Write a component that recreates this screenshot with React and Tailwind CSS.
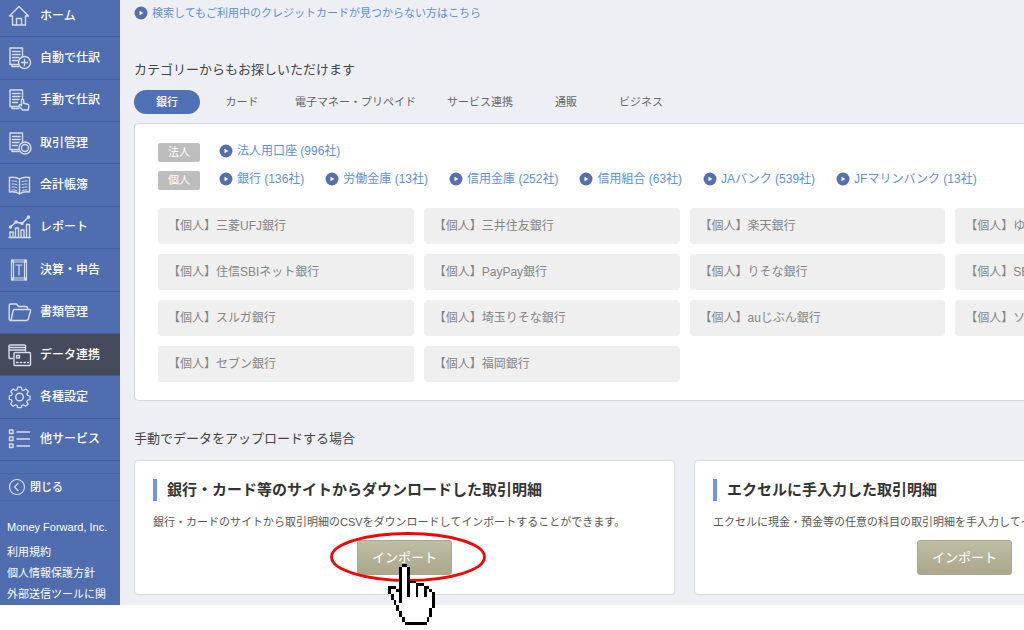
import clsx from 'clsx'

const Icon = ({ children }) => (
  <svg viewBox="0 0 24 24" className="size-6 shrink-0" fill="none" stroke="currentColor" strokeWidth="1.4" strokeLinecap="round" strokeLinejoin="round">
    {children}
  </svg>
)

// sheet of paper shared by the three journal icons
const Sheet = () => (
  <>
    <path d="M14.500 10.500V2H2v16.500h8.500" />
    <path d="M4.500 5.500h7.500M4.500 8.500h7.500M4.500 11.500h6.500M4.500 14.500h5" />
    <path d="M4 18.500v2h7" />
  </>
)

const menu = [
  {
    label: 'ホーム',
    icon: <path d="M1.500 12 11 2.500l9.500 9.500h-3v9h-13v-9zM8.500 21v-6.500h5V21" />,
  },
  {
    label: '自動で仕訳',
    icon: <><Sheet /><circle cx="16.500" cy="16.500" r="6" /><path d="M16.500 13.500v6M13.500 16.500h6" /></>,
  },
  {
    label: '手動で仕訳',
    icon: <><Sheet /><path d="M13.500 17.500v-5.200c0-1.600 2.200-1.600 2.200 0v3l4 .9c1 .3 1.300 1 1.200 2l-.7 3.800h-5.400l-3.600-3.600c-.9-1.100.4-2.300 1.400-1.600z" /></>,
  },
  {
    label: '取引管理',
    icon: <><Sheet /><circle cx="17" cy="17" r="6" /><circle cx="17" cy="17" r="3.500" /></>,
  },
  {
    label: '会計帳簿',
    icon: (
      <>
        <path d="M11.500 6C8.500 4 5 4 1.500 4.500V19c3.500-.5 7-.3 10 2 3-2.300 6.500-2.500 10-2V4.500C18 4 14.500 4 11.500 6zM11.500 6v15" />
        <path d="M4 8c2-.2 3.500 0 5 .8M4 11c2-.2 3.500 0 5 .8M4 14c2-.2 3.500 0 5 .8M4 17c2-.2 3.500 0 5 .8M19 8c-2-.2-3.500 0-5 .8M19 11c-2-.2-3.500 0-5 .8M19 14c-2-.2-3.500 0-5 .8M19 17c-2-.2-3.500 0-5 .8" strokeWidth="1" />
      </>
    ),
  },
  {
    label: 'レポート',
    icon: (
      <>
        <path d="M1 22.500h21.500M2 22v-5h3v5M7.500 22v-9h3v9M13 22v-7h3v7M18.500 22V9.500h3V22" />
        <path d="m2.500 12 5.500-5 6 1.500L20.500 2" />
        <g fill="currentColor"><circle cx="2.500" cy="12" r="1" /><circle cx="8" cy="7" r="1" /><circle cx="14" cy="8.500" r="1" /><circle cx="20.500" cy="2" r="1" /></g>
      </>
    ),
  },
  {
    label: '決算・申告',
    icon: (
      <>
        <path d="M3.500 2h15v20h-15zM3.500 4h15M3.500 20h15M5.500 4v16M16.500 4v16M11 7v10M8 7h6" strokeWidth="1.200" />
        <g fill="currentColor"><circle cx="4.500" cy="3" r=".8" /><circle cx="17.500" cy="3" r=".8" /><circle cx="4.500" cy="21" r=".8" /><circle cx="17.500" cy="21" r=".8" /></g>
      </>
    ),
  },
  {
    label: '書類管理',
    icon: <path d="M3 20.500C1.800 20.500 1.200 20 1.200 19V5.500c0-1 .6-1.500 1.500-1.500H8.500l2 2.500H18c1 0 1.500.5 1.500 1.500v1.500M3 20.500 5 11c.2-1 .8-1.500 1.800-1.500h14.700c1 0 1.300.6 1 1.500l-2.200 8c-.3 1-.9 1.500-1.900 1.500z" />,
  },
  {
    label: 'データ連携',
    active: true,
    icon: (
      <>
        <path d="M4.500 15.500H2c-.7 0-1-.4-1-1V3c0-.6.4-1 1-1h14.500c.6 0 1 .4 1 1v5M1 4.500h16.500M1 7h16.500" />
        <rect x="6" y="9.500" width="16.500" height="13" rx="1" />
        <rect x="8.500" y="12.500" width="3" height="2.500" />
        <path d="M8.500 19.500h12" strokeDasharray="1.500 2.200" />
      </>
    ),
  },
  {
    label: '各種設定',
    icon: (
      <>
        <circle cx="11.500" cy="12" r="3.800" />
        <path d="M10 2h4l.6 3 1.800.7 2.600-1.700 2.800 2.800-1.700 2.600.7 1.800 2.700.6v4l-2.700.6-.9 1.800 1.600 2.400-2.800 2.600-2.500-1.600-1.700.7-.5 2.500h-4l-.6-2.600-1.700-.7-2.600 1.700L2.400 20.400l1.700-2.600-.8-1.700-2.300-.5v-4l2.500-.6.7-1.800L2.500 6.700 5.300 4l2.400 1.600L9.400 5z" transform="matrix(.92 0 0 .9 .4 .4)" />
      </>
    ),
  },
  {
    label: '他サービス',
    icon: (
      <>
        <rect x="1.500" y="3" width="3.500" height="3.500" /><rect x="1.500" y="10" width="3.500" height="3.500" /><rect x="1.500" y="17" width="3.500" height="3.500" />
        <path d="M9 5h12.500M9 12h12.500M9 19h12.500" />
      </>
    ),
  },
]

const tabs = ['銀行', 'カード', '電子マネー・プリペイド', 'サービス連携', '通販', 'ビジネス']

const groups = [
  { name: '法人', links: ['法人用口座 (996社)'] },
  {
    name: '個人',
    links: ['銀行 (136社)', '労働金庫 (13社)', '信用金庫 (252社)', '信用組合 (63社)', 'JAバンク (539社)', 'JFマリンバンク (13社)'],
  },
]

const banks = [
  '三菱UFJ銀行', '三井住友銀行', '楽天銀行', 'ゆうちょ銀行',
  '住信SBIネット銀行', 'PayPay銀行', 'りそな銀行', 'SBI新生銀行',
  'スルガ銀行', '埼玉りそな銀行', 'auじぶん銀行', 'ソニー銀行',
  'セブン銀行', '福岡銀行',
]

const uploads = [
  {
    title: '銀行・カード等のサイトからダウンロードした取引明細',
    text: '銀行・カードのサイトから取引明細のCSVをダウンロードしてインポートすることができます。',
    pointed: true,
  },
  {
    title: 'エクセルに手入力した取引明細',
    text: 'エクセルに現金・預金等の任意の科目の取引明細を手入力してインポートすることができます。',
  },
]

// X = outline, o = white inside
const hand = [
  '     XX',
  '    XooX',
  '    XooX',
  '    XooX',
  '    XooX',
  '    XooX',
  '    XooXXX',
  '    XooXooXXX',
  'XXX XooXooXooXX',
  'XooXXooXooXooXoX',
  'XoooXooXooXooXooX',
  ' XooXooXooXooXooX',
  ' XooXoooooooooooX',
  '  XoXoooooooooooX',
  '  XoooooooooooooX',
  '   XooooooooooooX',
  '   XoooooooooooX',
  '    XooooooooooX',
  '    XooooooooooX',
  '     XooooooooX',
  '     XooooooooX',
  '      XXXXXXXX',
]

const HandPointer = () => (
  <svg viewBox="0 0 17 22" className="pointer-events-none absolute left-[31px] top-6 z-10 w-[47px]" shapeRendering="crispEdges">
    {hand.map((row, y) =>
      [...row].map((c, x) =>
        c === ' ' ? null : <rect key={`${x}-${y}`} x={x} y={y} width="1" height="1" fill={c === 'X' ? '#000' : '#fff'} />
      )
    )}
  </svg>
)

const Bullet = () => (
  <svg viewBox="0 0 14 14" className="size-3.5 shrink-0">
    <circle cx="7" cy="7" r="6.500" fill="#5570ac" />
    <path d="M5.500 4.700v4.600L9.300 7z" fill="#fff" />
  </svg>
)

const ArrowLink = ({ children, className }) => (
  <a href="#" className={clsx('flex items-center gap-1 whitespace-nowrap text-[#5b8fdb]', className)}>
    <Bullet />
    {children}
  </a>
)

const Sidebar = () => (
  <aside className="w-30 shrink-0 overflow-hidden bg-[#4f6daf] text-white">
    <nav className="-mt-[5px] flex h-[466px] flex-col">
      {menu.map(({ label, icon, active }) => (
        <a
          key={label}
          href="#"
          className={clsx(
            'flex flex-1 items-center gap-2 border-b border-[#405e9d] pl-2 text-xs font-medium whitespace-nowrap',
            active && 'bg-[#454b5a]'
          )}
        >
          <span className="text-[#d5def0]"><Icon>{icon}</Icon></span>
          {label}
        </a>
      ))}
    </nav>
    <button className="mt-3 flex h-7 w-full items-center gap-1 border-y border-[#4865a5] pl-2 text-[11px] font-medium">
      <svg viewBox="0 0 18 18" className="size-[18px] text-[#d5def0]" fill="none" stroke="currentColor" strokeWidth="1.200">
        <circle cx="9" cy="9" r="7.500" />
        <path d="M10.500 5 6.500 9l4 4" />
      </svg>
      閉じる
    </button>
    <div className="mt-4 flex flex-col pl-[7px] text-[11px] leading-[21px] whitespace-nowrap">
      <a href="#" className="mb-1">Money Forward, Inc.</a>
      <a href="#">利用規約</a>
      <a href="#">個人情報保護方針</a>
      <a href="#">外部送信ツールに関</a>
    </div>
  </aside>
)

const BankPanel = () => (
  <section className="mt-[9px] rounded border border-[#d5d6da] bg-white px-[23px] pt-3.5 pb-[18px]">
    {groups.map(({ name, links }) => (
      <div key={name} className="flex h-7 items-center gap-[19px]">
        <span className="h-[19px] w-[42px] rounded-xs bg-[#bdbdbd] text-center text-[11px] leading-[19px] text-white">{name}</span>
        <div className="flex gap-[21px] pb-0.5">
          {links.map((link) => (
            <ArrowLink key={link} className="text-xs">{link}</ArrowLink>
          ))}
        </div>
      </div>
    ))}
    <ul className="mt-3.5 grid grid-cols-4 gap-2.5">
      {banks.map((bank) => (
        <li key={bank}>
          <button className="block h-9 w-full rounded bg-[#efefef] px-2.5 text-left text-xs text-[#868686]">【個人】{bank}</button>
        </li>
      ))}
    </ul>
  </section>
)

const UploadCard = ({ title, text, pointed }) => (
  <section className="rounded border border-[#d9dadd] bg-white px-[18px] pt-[18px] pb-[19px]">
    <h3 className="border-l-4 border-[#7295da] pl-2.5 text-[15px] leading-[22px] font-bold text-[#333]">{title}</h3>
    <p className="mt-3 text-[11px] leading-[18px] whitespace-nowrap text-[#555]">{text}</p>
    <div className="relative mx-auto mt-[9px] w-[95px]">
      <button className="block h-[35px] w-full rounded-[3px] border border-[#a9a88c] bg-linear-to-b from-[#bfbea6] to-[#a9a88b] text-[13px] text-white">
        インポート
      </button>
      {pointed && (
        <>
          <svg viewBox="0 0 156 50" className="pointer-events-none absolute -left-[27px] -top-2 w-[156px] max-w-none" fill="none">
            <ellipse cx="78" cy="25" rx="76.500" ry="23.500" stroke="#f00606" strokeWidth="2.800" />
          </svg>
          <HandPointer />
        </>
      )}
    </div>
  </section>
)

const App = () => (
  <div className="min-h-dvh overflow-x-hidden bg-white font-['Liberation_Sans','Noto_Sans_CJK_JP',sans-serif]">
    <div className="flex bg-[#eeeff4]">
      <Sidebar />
      <main className="min-w-[1129px] flex-1 px-3.5 pb-2">
        <ArrowLink className="h-[26px] text-[11px]">検索してもご利用中のクレジットカードが見つからない方はこちら</ArrowLink>
        <h2 className="mt-[33px] text-[13px] leading-[22px] text-[#444]">カテゴリーからもお探しいただけます</h2>
        <div className="mt-[9px] flex gap-[9px]">
          {tabs.map((tab, i) => (
            <button
              key={tab}
              className={clsx(
                'h-6 min-w-[66px] rounded-full px-[11px] text-[11px] whitespace-nowrap',
                i === 0 ? 'bg-[#4f71b5] font-medium text-white' : 'text-[#666]'
              )}
            >
              {tab}
            </button>
          ))}
        </div>
        <BankPanel />
        <h2 className="mt-[27px] text-[13px] leading-[22px] text-[#444]">手動でデータをアップロードする場合</h2>
        <div className="mt-2.5 grid grid-cols-2 gap-[19px]">
          {uploads.map((item) => (
            <UploadCard key={item.title} {...item} />
          ))}
        </div>
      </main>
    </div>
  </div>
)

export default App
